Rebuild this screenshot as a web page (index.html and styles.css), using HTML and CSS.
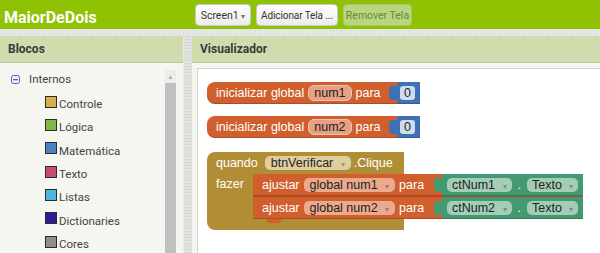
FILE: index.html
```html
<!DOCTYPE html>
<html>
<head>
    <title>MaiorDeDois - Blocos</title>
    <link rel="stylesheet" href="styles.css">
</head>
<body>
    <header class="topbar">
        <div class="app-title">MaiorDeDois</div>
        <div class="tools">
            <button class="btn btn-screen">Screen1 <span class="caret">▾</span></button>
            <button class="btn btn-add">Adicionar Tela ...</button>
            <button class="btn btn-off">Remover Tela</button>
        </div>
    </header>
    <div class="band"></div>

    <main class="main">
        <section class="panel panel-left">
            <div class="panel-head">Blocos</div>
            <div class="tree-body">
                <div class="tree">
                    <div class="tree-root">
                        <svg class="minus" width="9" height="9" viewBox="0 0 9 9">
                            <rect x="0.5" y="0.5" width="8" height="8" rx="2" fill="#eef" stroke="#5a5fb3"/>
                            <rect x="2" y="4" width="5" height="1.3" fill="#5a5fb3"/>
                        </svg>
                        <span>Internos</span>
                    </div>
                    <div class="tree-item"><i class="swatch" style="background:#dcae4b"></i><span>Controle</span></div>
                    <div class="tree-item"><i class="swatch" style="background:#84b844"></i><span>Lógica</span></div>
                    <div class="tree-item"><i class="swatch" style="background:#4a82c4"></i><span>Matemática</span></div>
                    <div class="tree-item"><i class="swatch" style="background:#c94a76"></i><span>Texto</span></div>
                    <div class="tree-item"><i class="swatch" style="background:#4cb8e2"></i><span>Listas</span></div>
                    <div class="tree-item"><i class="swatch" style="background:#2a1d96"></i><span>Dictionaries</span></div>
                    <div class="tree-item"><i class="swatch" style="background:#8e8e8e"></i><span>Cores</span></div>
                </div>
                <div class="scrollbar">
                    <div class="scroll-up">▲</div>
                    <div class="scroll-thumb"></div>
                </div>
            </div>
        </section>

        <div class="divider"></div>

        <section class="panel panel-right">
            <div class="panel-head">Visualizador</div>
            <div class="viewer-body">
                <div class="workspace">

                    <div class="block-row">
                        <div class="blk var init">
                            <span>inicializar global</span>
                            <span class="pill">num1</span>
                            <span>para</span>
                        </div>
                        <div class="blk math"><span class="num">0</span></div>
                    </div>

                    <div class="block-row">
                        <div class="blk var init">
                            <span>inicializar global</span>
                            <span class="pill">num2</span>
                            <span>para</span>
                        </div>
                        <div class="blk math"><span class="num">0</span></div>
                    </div>

                    <div class="event">
                        <div class="event-head">
                            <span>quando</span>
                            <span class="drop drop-gold">btnVerificar <span class="caret">▾</span></span>
                            <span class="clique">.Clique</span>
                        </div>
                        <div class="event-body">
                            <div class="event-label">fazer</div>
                            <div class="stack">
                                <div class="stmt">
                                    <div class="blk var set">
                                        <span>ajustar</span>
                                        <span class="drop drop-orange">global num1 <span class="caret">▾</span></span>
                                        <span>para</span>
                                    </div>
                                    <div class="blk comp">
                                        <span class="drop drop-green">ctNum1 <span class="caret">▾</span></span>
                                        <span class="dot">.</span>
                                        <span class="drop drop-green">Texto <span class="caret">▾</span></span>
                                    </div>
                                </div>
                                <div class="stmt stmt-last">
                                    <div class="blk var set">
                                        <span>ajustar</span>
                                        <span class="drop drop-orange">global num2 <span class="caret">▾</span></span>
                                        <span>para</span>
                                    </div>
                                    <div class="blk comp">
                                        <span class="drop drop-green">ctNum2 <span class="caret">▾</span></span>
                                        <span class="dot">.</span>
                                        <span class="drop drop-green">Texto <span class="caret">▾</span></span>
                                    </div>
                                </div>
                            </div>
                        </div>
                        <div class="event-foot"></div>
                    </div>

                </div>
            </div>
        </section>
    </main>
</body>
</html>
```

FILE: styles.css
```css
html, body {
    margin: 0;
    height: 100%;
    overflow: hidden;
}
body {
    background-color: #f6f6f0;
    font-family: Roboto, "Liberation Sans", sans-serif;
    color: #333333;
    display: flex;
    flex-direction: column;
}

/* top bar */
.topbar {
    height: 29px;
    background-color: #8fc202;
    display: flex;
    align-items: center;
    flex-shrink: 0;
}
.app-title {
    width: 195px;
    padding: 5px 0 0 4px;
    box-sizing: border-box;
    font-size: 16px;
    font-weight: bold;
    color: #ffffff;
}
.tools {
    display: flex;
    gap: 5px;
    padding-top: 1px;
}
.btn {
    height: 22px;
    padding: 0;
    font-family: Roboto, "Liberation Sans", sans-serif;
    font-size: 10.5px;
    color: #333333;
    background: linear-gradient(#ffffff, #ececec);
    border: 1px solid #c8c8c8;
    border-radius: 4px;
    white-space: nowrap;
}
.btn-screen { width: 56px; }
.btn-add {
    width: 82px;
    font-size: 10px;
    letter-spacing: -0.1px;
}
.btn-off {
    width: 69px;
    background: #bad57f;
    border-color: #a9c66a;
    color: #6a8a33;
}
.caret {
    font-size: 8px;
    color: #777777;
}
.band {
    height: 7px;
    flex-shrink: 0;
    background-color: #e4e4e2;
    background-image: repeating-linear-gradient(90deg, #dcdcda 0 1px, #e8e8e6 1px 3px);
}

/* panels */
.main {
    flex: 1;
    display: flex;
    min-height: 0;
}
.panel {
    display: flex;
    flex-direction: column;
}
.panel-left {
    width: 183px;
    flex-shrink: 0;
}
.panel-right {
    flex: 1;
    min-width: 0;
}
.panel-head {
    height: 26px;
    line-height: 26px;
    padding-left: 8px;
    font-size: 12px;
    font-weight: bold;
    color: #3a3a3a;
    background-color: #cfdcae;
    border-bottom: 1px solid #b9c69c;
    flex-shrink: 0;
}
.divider {
    width: 9px;
    flex-shrink: 0;
    background-color: #dcdcda;
    border-left: 1px solid #e9e9e7;
    box-sizing: border-box;
    background-image: repeating-linear-gradient(0deg, #d6d6d4 0 1px, #e2e2e0 1px 3px);
}

/* tree */
.tree-body {
    flex: 1;
    display: flex;
    background-color: #f6f6f0;
}
.tree {
    flex: 1;
    padding-top: 5px;
}
.tree-root {
    height: 22px;
    display: flex;
    align-items: center;
    padding-left: 11px;
    font-size: 11.5px;
    color: #444444;
}
.tree-root span {
    margin-left: 9px;
}
.tree-item {
    height: 23.33px;
    display: flex;
    align-items: center;
    padding-left: 45px;
    font-size: 11.5px;
    color: #444444;
}
.tree-item span {
    padding: 5px 0 0 2px;
}
.swatch {
    width: 10px;
    height: 10px;
    border: 1px solid #2b2b2b;
    flex-shrink: 0;
}
.scrollbar {
    width: 11px;
    margin: 7px 7px 0 0;
    display: flex;
    flex-direction: column;
}
.scroll-up {
    height: 13px;
    background-color: #ececec;
    color: #a8a8a8;
    font-size: 6px;
    text-align: center;
    line-height: 13px;
}
.scroll-thumb {
    flex: 1;
    background-color: #c0c0c0;
}

/* workspace */
.viewer-body {
    flex: 1;
    padding: 5px 0 0 5px;
    display: flex;
    background-color: #f6f6f0;
}
.workspace {
    flex: 1;
    background-color: #ffffff;
    border-top: 1px solid #d2d2d2;
    border-left: 1px solid #d2d2d2;
    padding: 13px 0 0 9px;
    display: flex;
    flex-direction: column;
    align-items: flex-start;
    gap: 12px;
    font-family: "Liberation Sans", Arial, sans-serif;
    font-size: 12.5px;
    color: #ffffff;
}
.block-row {
    display: flex;
}
.blk {
    height: 22px;
    display: flex;
    align-items: center;
    box-sizing: border-box;
    box-shadow: inset 0 -1px rgba(0, 0, 0, 0.18);
}
.var {
    background-color: #d05f2d;
}
.init {
    width: 190px;
    padding-left: 9px;
    gap: 4px;
    border-radius: 8px 0 0 8px;
}
.math {
    position: relative;
    width: 23px;
    background-color: #3f71b5;
    padding-left: 3px;
}
.math::before,
.comp::before {
    content: "";
    position: absolute;
    left: -8px;
    top: 4px;
    width: 8px;
    height: 14px;
    border-radius: 4px 0 0 4px;
    background: inherit;
}
.num {
    height: 14px;
    line-height: 14px;
    padding: 0 4px;
    background-color: #cfdbef;
    color: #1e1e1e;
    border-radius: 3px;
}
.pill {
    height: 14px;
    line-height: 14px;
    padding: 0 5px;
    background-color: #e6a083;
    border: 1px solid #f3c6b0;
    border-radius: 6px;
    color: #222222;
}

/* event block */
.event {
    margin-top: 2px;
    display: flex;
    flex-direction: column;
}
.event-head {
    width: 197px;
    height: 22px;
    display: flex;
    align-items: center;
    gap: 7px;
    padding-left: 9px;
    box-sizing: border-box;
    background-color: #b18e35;
    border-radius: 8px 0 0 0;
}
.event-head .drop {
    padding: 0 6px;
}
.clique {
    margin-left: -4px;
}
.event-body {
    display: flex;
}
.event-label {
    width: 46px;
    padding: 3px 0 0 9px;
    box-sizing: border-box;
    background-color: #b18e35;
}
.stack {
    display: flex;
    flex-direction: column;
}
.stmt {
    display: flex;
    position: relative;
}
.stmt-last {
    border-top: 1px solid #b04e23;
}
.stmt-last::after {
    content: "";
    position: absolute;
    left: 14px;
    bottom: -4px;
    width: 14px;
    height: 4px;
    background-color: #d05f2d;
    border-radius: 0 0 3px 3px;
}
.set {
    width: 189px;
    padding-left: 9px;
    gap: 4px;
}
.set .drop {
    padding: 0 6px;
}
.comp {
    position: relative;
    width: 141px;
    padding-left: 5px;
    gap: 5px;
    background-color: #439970;
}
.event-foot {
    width: 197px;
    height: 11px;
    background-color: #b18e35;
    border-radius: 0 0 0 8px;
}
.drop {
    height: 14px;
    line-height: 14px;
    padding: 0 5px;
    border-radius: 5px;
    color: #1e1e1e;
    white-space: nowrap;
}
.drop .caret {
    margin-left: 4px;
    color: rgba(0, 0, 0, 0.3);
}
.drop-gold { background-color: #dfcf9e; }
.drop-orange { background-color: #eba98d; }
.drop-green { background-color: #a4cdb8; }
.dot {
    margin: 0 1px;
}
```
